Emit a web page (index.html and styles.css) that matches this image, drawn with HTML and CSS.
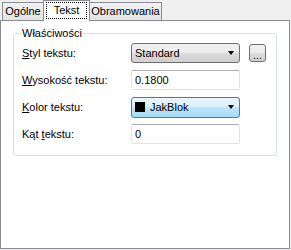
FILE: index.html
```html
<!DOCTYPE html>
<html lang="pl">
<head>
    <meta charset="UTF-8">
    <meta name="viewport" content="width=device-width, initial-scale=1.0">
    <title>Tekst</title>
    <link rel="stylesheet" href="styles.css">
</head>
<body>

<div class="dialog">
    <div class="tabs">
        <div class="tab tab-general">Ogólne</div>
        <div class="tab tab-text active"><span class="focus">Tekst</span></div>
        <div class="tab tab-border">Obramowania</div>
    </div>

    <div class="panel">
        <fieldset class="group">
            <legend>Właściwości</legend>
            <div class="form-grid">
                <label><u>S</u>tyl tekstu:</label>
                <div class="combo">
                    <span class="combo-text">Standard</span>
                    <span class="arrow"></span>
                </div>
                <button class="dots" type="button">...</button>

                <label><u>W</u>ysokość tekstu:</label>
                <div class="textbox">0.1800</div>
                <span></span>

                <label><u>K</u>olor tekstu:</label>
                <div class="combo hot">
                    <span class="swatch"></span>
                    <span class="combo-text">JakBlok</span>
                    <span class="arrow"></span>
                </div>
                <span></span>

                <label>Kąt <u>t</u>ekstu:</label>
                <div class="textbox">0</div>
                <span></span>
            </div>
        </fieldset>
    </div>
</div>

</body>
</html>
```

FILE: styles.css
```css
* {
    margin: 0;
    padding: 0;
    box-sizing: border-box;
}

body {
    font-family: "Liberation Sans", Arial, sans-serif;
    font-size: 11px;
    color: #000;
    background-color: #f0f0f0;
}

.dialog {
    width: 290px;
}

/* tab strip */
.tabs {
    display: flex;
    align-items: flex-end;
    height: 20px;
    padding-left: 2px;
}

.tab {
    height: 18px;
    line-height: 17px;
    text-align: center;
    white-space: nowrap;
    border: 1px solid #898c95;
    border-bottom: none;
    background: linear-gradient(#f2f2f2, #e3e3e3);
}

.tab + .tab {
    margin-left: -1px;
}

.tab-general {
    width: 42px;
}

.tab-text {
    width: 47px;
}

.tab-border {
    width: 73px;
}

.tab.active {
    position: relative;
    z-index: 1;
    height: 21px;
    margin-bottom: -1px;
    padding: 2px 3px 0;
    background: #fff;
}

.focus {
    display: block;
    line-height: 15px;
    outline: 1px dotted #000;
}

/* page */
.panel {
    height: 229px;
    padding: 6px 12px 0;
    background: #fff;
    border: 1px solid #898c95;
}

.group {
    padding: 3px 8px 11px;
    border: 1px solid #d5dfe5;
    border-radius: 3px;
}

.group legend {
    padding: 0 1px;
    margin-left: -1px;
    line-height: 13px;
}

.form-grid {
    display: grid;
    grid-template-columns: 109px 109px auto;
    grid-auto-rows: 20px;
    row-gap: 7px;
    align-items: center;
}

.form-grid label {
    line-height: 13px;
}

.combo {
    display: flex;
    align-items: center;
    height: 20px;
    padding: 0 4px 0 3px;
    border: 1px solid #707070;
    border-radius: 3px;
    background: linear-gradient(#f2f2f2 0%, #ebebeb 50%, #dddddd 50%, #cfcfcf 100%);
}

.combo.hot {
    height: 21px;
    border-color: #3c7fb1;
    background: linear-gradient(#eaf6fd 0%, #d9f0fc 50%, #bee6fd 50%, #a7d9f5 100%);
}

.combo-text {
    flex: 1;
}

.arrow {
    width: 0;
    height: 0;
    margin-right: 1px;
    border-left: 3.5px solid transparent;
    border-right: 3.5px solid transparent;
    border-top: 4px solid #000;
}

.swatch {
    width: 10px;
    height: 10px;
    margin-right: 5px;
    background: #000;
}

.textbox {
    height: 20px;
    padding: 0 3px;
    line-height: 18px;
    border: 1px solid #e2e3ea;
    border-top-color: #abadb3;
    border-radius: 2px;
    background: #fff;
}

.dots {
    width: 17px;
    height: 18px;
    margin-left: 9px;
    font-family: inherit;
    font-size: 11px;
    line-height: 20px;
    border: 1px solid #707070;
    border-radius: 3px;
    background: linear-gradient(#f2f2f2 0%, #ebebeb 50%, #dddddd 50%, #cfcfcf 100%);
}
```
